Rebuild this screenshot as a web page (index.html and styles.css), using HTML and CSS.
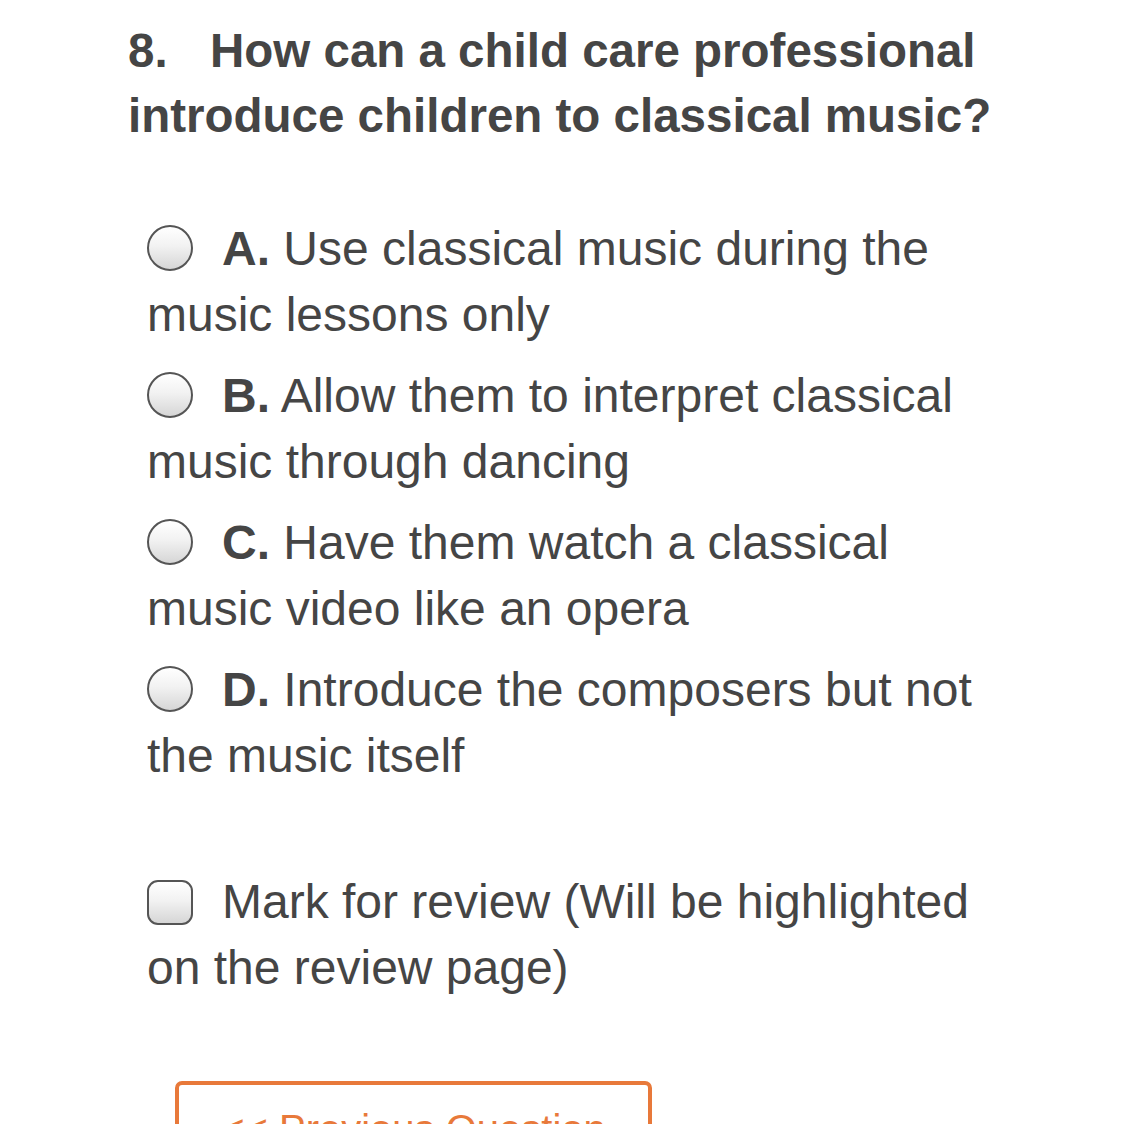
FILE: index.html
```html
<!DOCTYPE html>
<html lang="en">
<head>
<meta charset="utf-8">
<title>Question 8</title>
<link rel="stylesheet" href="styles.css">
</head>
<body>
<main class="page">
  <h1 class="question"><span class="qnum">8.</span>How can a child care professional introduce children to classical music?</h1>
  <ul class="options">
    <li class="option"><span class="radio"></span><b>A.</b> Use classical music during the music lessons only</li>
    <li class="option"><span class="radio"></span><b>B.</b> Allow them to interpret classical music through dancing</li>
    <li class="option"><span class="radio"></span><b>C.</b> Have them watch a classical music video like an opera</li>
    <li class="option"><span class="radio"></span><b>D.</b> Introduce the composers but not the music itself</li>
  </ul>
  <p class="review"><span class="checkbox"></span>Mark for review (Will be highlighted on the review page)</p>
  <div class="nav">
    <button class="btn-prev">&lt;&lt; Previous Question</button>
  </div>
</main>
</body>
</html>
```

FILE: styles.css
```css
html, body {
  margin: 0;
  padding: 0;
  background: #ffffff;
}
body {
  font-family: "Liberation Sans", Arial, Helvetica, sans-serif;
  color: #454545;
  overflow: hidden;
  height: 1124px;
}
.page {
  padding: 18px 0 0 128px;
  width: 877px;
}
.question {
  margin: 0;
  font-size: 47.5px;
  line-height: 65px;
  font-weight: 700;
  color: #454545;
}
.qnum {
  display: inline-block;
  width: 82px;
}
.options {
  list-style: none;
  margin: 68px 0 0 19px;
  padding: 0;
  display: flex;
  flex-direction: column;
  gap: 15px;
}
.option {
  font-size: 48px;
  line-height: 66px;
}
.option b {
  font-weight: 700;
}
.radio {
  display: inline-block;
  box-sizing: border-box;
  width: 46px;
  height: 46px;
  border-radius: 50%;
  border: 2.5px solid #555555;
  background: linear-gradient(180deg, #ffffff 0%, #f2f2f2 45%, #d6d6d6 100%);
  vertical-align: -6px;
  margin-right: 29px;
}
.review {
  margin: 80px 0 0 19px;
  font-size: 48px;
  line-height: 66px;
}
.checkbox {
  display: inline-block;
  box-sizing: border-box;
  width: 46px;
  height: 45px;
  border-radius: 11px;
  border: 2.5px solid #555555;
  background: linear-gradient(180deg, #ffffff 0%, #f2f2f2 45%, #d6d6d6 100%);
  vertical-align: -7px;
  margin-right: 29px;
}
.nav {
  margin: 80px 0 0 47px;
}
.btn-prev {
  box-sizing: border-box;
  width: 477px;
  height: 110px;
  border: 4px solid #e8793a;
  border-radius: 7px;
  background: #ffffff;
  color: #e8793a;
  font-family: "Liberation Sans", Arial, Helvetica, sans-serif;
  font-size: 40px;
  line-height: 48px;
  padding: 20px 0 0 0;
  text-align: center;
  white-space: nowrap;
  display: flex;
  justify-content: center;
  align-items: flex-start;
}
```
